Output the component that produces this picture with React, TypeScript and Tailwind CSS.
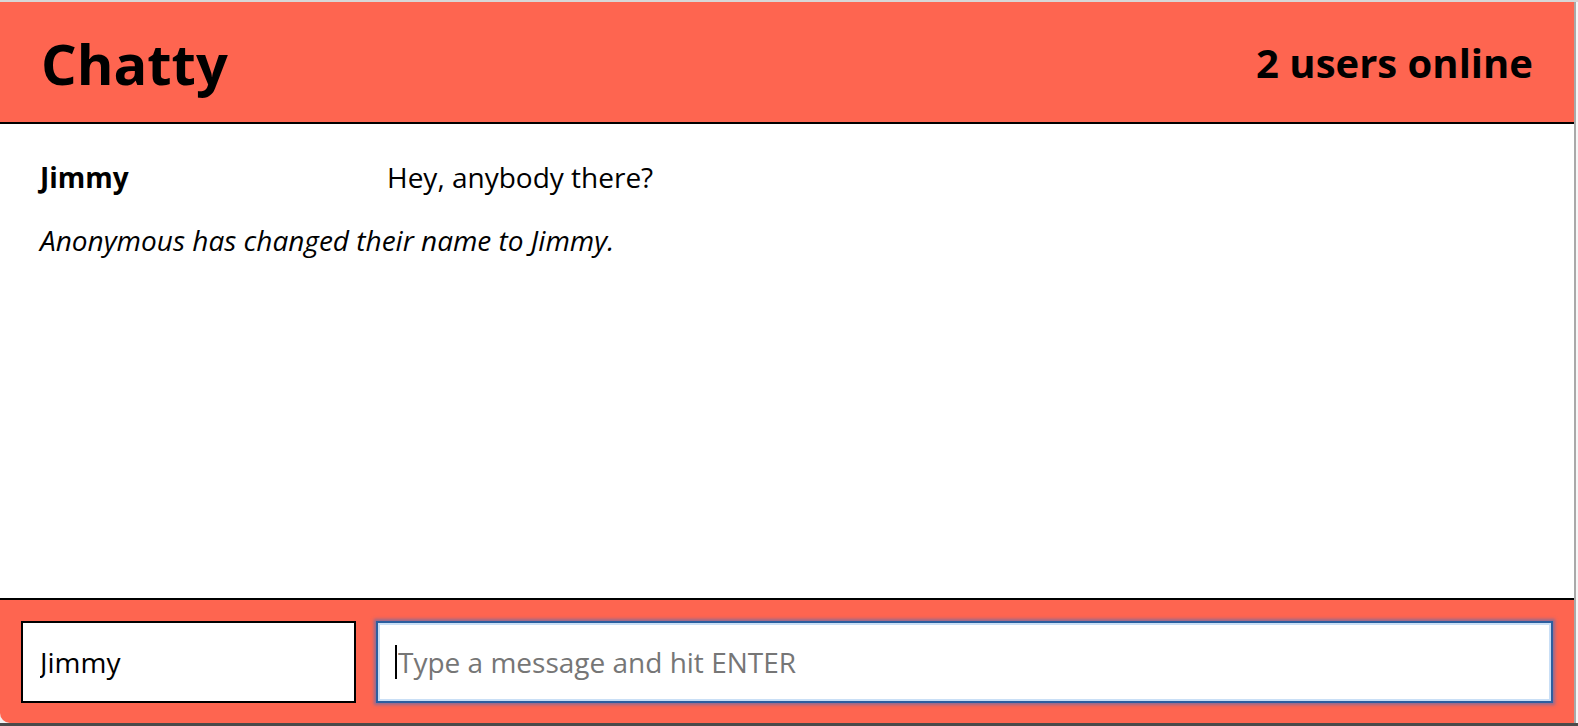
import { useState } from 'react';

type Message = {
  id: number;
  type: 'message' | 'notification';
  username?: string;
  content: string;
};

const initialMessages: Message[] = [
  { id: 1, type: 'message', username: 'Jimmy', content: 'Hey, anybody there?' },
  { id: 2, type: 'notification', content: 'Anonymous has changed their name to Jimmy.' },
];

function NavBar({ usersOnline }: { usersOnline: number }) {
  return (
    <nav className="flex items-center justify-between h-[122px] shrink-0 pl-[41px] pr-[41px] bg-[#fe6550] border-b-2 border-black">
      <a className="text-[56px] font-bold leading-none text-black pt-[2px]">Chatty</a>
      <span className="text-[40px] font-bold leading-none text-black pt-[2px]">{usersOnline} users online</span>
    </nav>
  );
}

function MessageList({ messages }: { messages: Message[] }) {
  return (
    <main className="flex-1 bg-white pt-[32px] pl-[40px] text-[28px] leading-[42px] text-black">
      {messages.map((m) =>
        m.type === 'message' ? (
          <div key={m.id} className="flex mb-[21px]">
            <span className="w-[347px] shrink-0 font-bold">{m.username}</span>
            <span>{m.content}</span>
          </div>
        ) : (
          <div key={m.id} className="italic">
            {m.content}
          </div>
        )
      )}
    </main>
  );
}

function ChatBar() {
  const [name, setName] = useState('Jimmy');
  const [text, setText] = useState('');
  return (
    <footer className="flex gap-[20px] shrink-0 bg-[#fe6550] border-t-2 border-black pt-[21px] pb-[20px] pl-[21px] pr-[21px] rounded-bl-[10px]">
      <input
        value={name}
        onChange={(e) => setName(e.target.value)}
        className="w-[335px] h-[82px] shrink-0 bg-white border-2 border-black pl-[17px] text-[28px] text-black outline-none"
      />
      <div className="flex-1 h-[82px] border-2 border-[#2c5e9f] shadow-[0_0_3px_2px_rgba(70,110,190,0.6)]">
        <div className="h-full border-2 border-[#c9dff6] bg-white flex items-center">
          <span className="w-[2px] h-[34px] bg-black ml-[15px]" />
          <input
            value={text}
            onChange={(e) => setText(e.target.value)}
            placeholder="Type a message and hit ENTER"
            className="flex-1 h-full bg-transparent pl-[1px] text-[28px] text-black placeholder:text-[#767676] outline-none"
          />
        </div>
      </div>
    </footer>
  );
}

export default function App() {
  return (
    <div className="w-[1578px] h-[726px] overflow-hidden bg-[#f2f2f2] flex flex-col" style={{ fontFamily: '"Open Sans", "Liberation Sans", sans-serif' }}>
      <div className="h-[2px] bg-[#d7d7d7] shrink-0" />
      <div className="flex flex-1 min-h-0">
        {/* Chat window */}
        <div className="w-[1574px] flex flex-col shrink-0">
          <NavBar usersOnline={2} />
          <MessageList messages={initialMessages} />
          <ChatBar />
        </div>
        <div className="w-[2px] bg-[#a9a9a9] shrink-0" />
        <div className="flex-1 bg-[#f7f7f7]" />
      </div>
      <div className="h-[3px] bg-[#4a4a4a] shrink-0" />
    </div>
  );
}
